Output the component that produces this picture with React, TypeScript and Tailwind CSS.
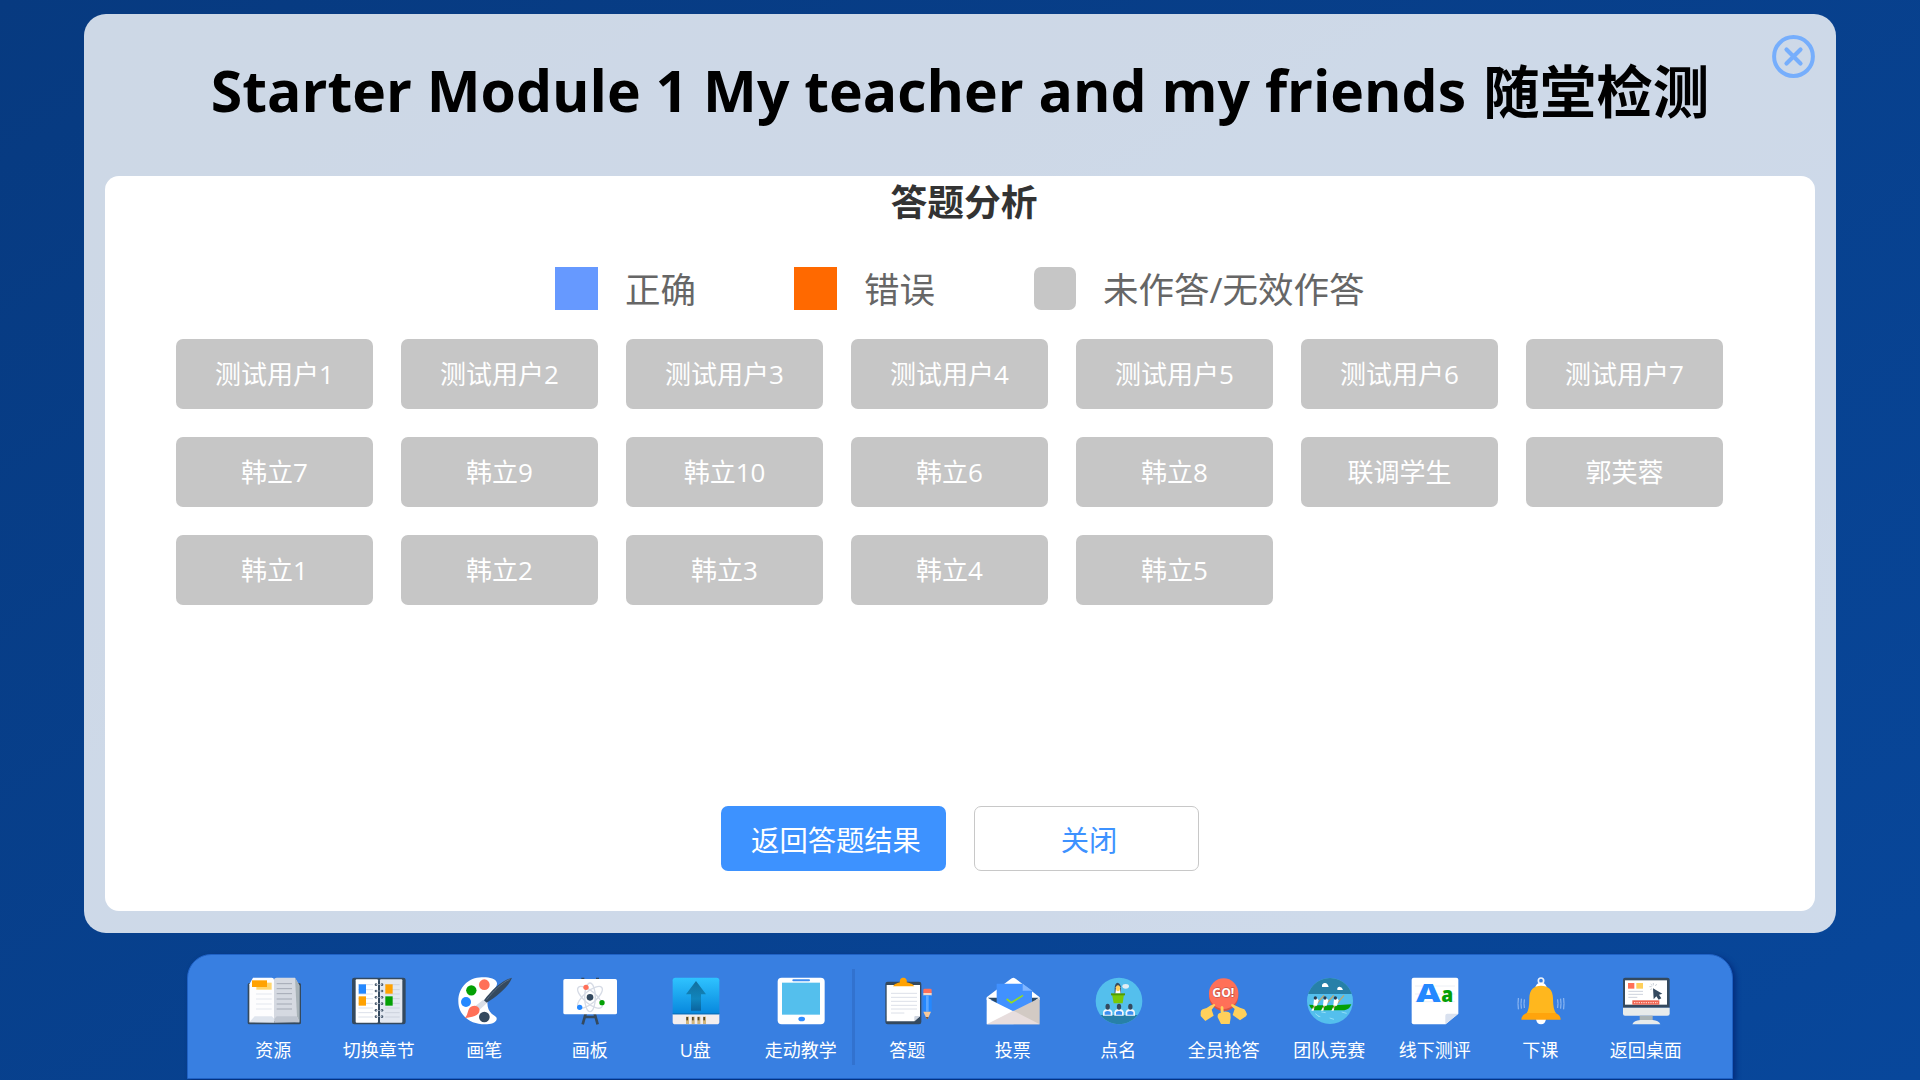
import type { ReactNode } from "react";

const students: string[] = [
  "测试用户1", "测试用户2", "测试用户3", "测试用户4", "测试用户5", "测试用户6", "测试用户7",
  "韩立7", "韩立9", "韩立10", "韩立6", "韩立8", "联调学生", "郭芙蓉",
  "韩立1", "韩立2", "韩立3", "韩立4", "韩立5",
];

type Tool = { label: string; box: string; icon: ReactNode };

const lines = (x1: number, x2: number, ys: number[], color: string, w = 2) =>
  ys.map((y) => <path key={`${x1}-${y}`} d={`M${x1} ${y}H${x2}`} stroke={color} strokeWidth={w} />);

const mainTools: Tool[] = [
  {
    label: "资源",
    box: "200 112 162 144",
    icon: (
      <>
        <rect x="202" y="130" width="160" height="124" rx="5" fill="#34495e" />
        <path d="M218 114h56q7 0 7 6v124l-74 4V134z" fill="#fdfdfe" />
        <path d="M281 120q0-6 8-6h55l12 22v112l-75-4z" fill="#d5d9e1" />
        <path d="M344 114l14 24v110l-8-18z" fill="#a9b3b8" />
        <path d="M207 248l16-18h52l7 8v11z" fill="#dfe5ee" />
        <path d="M282 249v-11l7-8h60l9 18z" fill="#bfc5cf" />
        {lines(227, 274, [163, 178, 193, 208], "#e3e7ee", 3)}
        {lines(289, 335, [132, 147, 162, 178, 193, 208], "#a3a9b4", 3)}
        <rect x="228" y="129" width="46" height="21" fill="#ffd56d" />
        <rect x="215" y="122" width="45" height="20" fill="#ffa202" />
      </>
    ),
  },
  {
    label: "切换章节",
    box: "517 112 162 144",
    icon: (
      <>
        <rect x="517" y="114" width="161" height="140" rx="7" fill="#34495e" />
        <rect x="528" y="119" width="67" height="130" rx="3" fill="#fff" />
        <rect x="601" y="119" width="67" height="130" rx="3" fill="#e3e8f0" />
        {lines(536, 580, [135, 150, 163, 177, 191, 205, 219, 232], "#dce1ea", 3)}
        {lines(616, 660, [135, 150, 163, 177, 191, 205, 219, 232], "#ccd2dd", 3)}
        <rect x="537" y="134" width="22" height="28" fill="#2488ff" />
        <rect x="537" y="170" width="22" height="28" fill="#ffa202" />
        <rect x="617" y="134" width="22" height="28" fill="#ffa202" />
        <rect x="617" y="170" width="22" height="28" fill="#04a004" />
        {[135, 154, 173, 192, 212, 231].map((y) => (
          <g key={y} fill="#4b5d70">
            <circle cx="589" cy={y} r="4" />
            <circle cx="607" cy={y} r="4" />
            <rect x="589" y={y - 1} width="18" height="2" fill="#c5ccd8" />
          </g>
        ))}
      </>
    ),
  },
  {
    label: "画笔",
    box: "833 112 162 144",
    icon: (
      <>
        <path
          d="M904 113c20-1 43 3 46 17 2 14-20 28-26 44-6 18-2 38 10 48 9 7 16 8 15 17-2 11-18 15-35 15-46 0-80-28-80-69 0-43 31-71 70-72z"
          fill="#fff"
        />
        <circle cx="912" cy="135" r="16" fill="#ff7058" />
        <circle cx="873" cy="152" r="15.500" fill="#04a004" />
        <circle cx="857" cy="187" r="15" fill="#2488ff" />
        <circle cx="912" cy="232" r="16" fill="#34495e" />
        <path d="M995 114c-30 8-62 38-84 68-5 5 2 11 8 7 32-19 66-48 76-75z" fill="#34495e" />
        <path d="M988 119c-25 11-49 36-69 61" stroke="#5b6f84" strokeWidth="3" fill="none" />
        <path d="M909 180l11 10-24 22-12-12z" fill="#d8dde6" />
        <path d="M853 235c10-8 8-22 15-31 9-9 24-8 29 3 5 21-22 26-44 28z" fill="#ff7058" />
      </>
    ),
  },
  {
    label: "画板",
    box: "129 112 162 144",
    icon: (
      <>
        <path d="M184 114h9v6h-9zM228 114h9v6h-9z" fill="#34495e" />
        <path d="M197 222l-9 32M224 222l9 32M192 232h36" stroke="#34495e" strokeWidth="8" />
        <rect x="130" y="118" width="161" height="106" rx="5" fill="#fff" />
        <g fill="none" stroke="#d6dbe5" strokeWidth="4">
          <ellipse cx="210" cy="173" rx="16" ry="43" />
          <ellipse cx="210" cy="173" rx="18" ry="46" transform="rotate(50 210 173)" />
          <ellipse cx="210" cy="173" rx="18" ry="46" transform="rotate(-50 210 173)" />
        </g>
        <circle cx="210" cy="173" r="10" fill="#34495e" />
        <circle cx="198" cy="143" r="8" fill="#ff7058" />
        <circle cx="246" cy="189" r="8" fill="#04a004" />
        <circle cx="179" cy="203" r="8" fill="#2488ff" />
      </>
    ),
  },
  {
    label: "U盘",
    box: "446 112 162 144",
    icon: (
      <>
        <defs>
          <linearGradient id="driveBody" x1="0" y1="0" x2="0" y2="1">
            <stop offset="0" stopColor="#2fc3ff" />
            <stop offset="1" stopColor="#0787dd" />
          </linearGradient>
          <linearGradient id="driveArrow" x1="0" y1="0" x2="0" y2="1">
            <stop offset="0" stopColor="#126f9d" />
            <stop offset="0.600" stopColor="#1185bd" />
            <stop offset="1" stopColor="#0a649f" />
          </linearGradient>
        </defs>
        <path d="M457 122q0-8 8-8h124q8 0 8 8v101H457z" fill="url(#driveBody)" />
        <path d="M457 224h140v22q0 8-8 8H465q-8 0-8-8z" fill="#f3eeee" />
        <rect x="457" y="221" width="140" height="3" fill="#0a6cb5" />
        <path d="M527 124l30 40h-15v49h-30v-49h-15z" fill="url(#driveArrow)" />
        {[497, 514, 531, 548].map((x) => (
          <g key={x}>
            <rect x={x} y="231" width="9" height="22" fill="#d0b57c" />
            <rect x={x + 1} y="232" width="5" height="10" fill="#55472c" />
          </g>
        ))}
      </>
    ),
  },
  {
    label: "走动教学",
    box: "762 112 162 144",
    icon: (
      <>
        <rect x="773" y="114" width="141" height="140" rx="12" fill="#fff" />
        <rect x="786" y="129" width="114" height="96" fill="#54bfed" />
        <rect x="817" y="119" width="53" height="6" rx="3" fill="#3d8cf0" />
        <ellipse cx="845" cy="238" rx="10" ry="7" fill="#2f8cff" />
      </>
    ),
  },
];

const seat = (x: number) => (
  <g key={x}>
    <path d={`M${x - 14} 228v-10q2-10 14-10t14 10v10z`} fill="#f3f6fb" />
    <path d={`M${x - 9} 225v-8q9-6 18 0v8z`} fill="#3b8ff0" />
    <ellipse cx={x} cy="201" rx="6.500" ry="9" fill="#34495e" />
  </g>
);

const rower = (x: number) => (
  <g key={x}>
    <path d={`M${x + 26} 167l-34 40`} stroke="#c3a566" strokeWidth="4" />
    <path d={`M${x - 6} 198l2-20 8-4 6 8-5 16z`} fill="#fff" />
    <circle cx={x} cy="175" r="5" fill="#2a3b4d" />
    <path d={`M${x - 8} 206l5 0-2 7h-7z`} fill="#fff" />
  </g>
);

const classTools: Tool[] = [
  {
    label: "答题",
    box: "122 112 162 144",
    icon: (
      <>
        <rect x="135" y="126" width="108" height="128" rx="7" fill="#34495e" />
        <path d="M139 136h100v94l-17 15h-83z" fill="#fff" />
        <path d="M239 229l-17 16v-13q0-3 3-3z" fill="#d0d6e0" />
        {lines(152, 230, [161, 173, 185, 197, 208], "#dce0e8", 3)}
        {lines(152, 192, [220], "#dce0e8", 3)}
        <path d="M158 140c7-10 15-9 21-12-2-8 3-14 10-14s12 6 10 14c6 3 16 2 23 12z" fill="#ffa202" />
        <path d="M249 151q0-4 4-4h17q4 0 4 4v10h-25z" fill="#ff7058" />
        <rect x="249" y="160" width="25" height="8" fill="#f4d9c8" />
        <rect x="249" y="167" width="25" height="49" fill="#2488ff" />
        <rect x="257" y="167" width="8" height="49" fill="#5da7ff" />
        <path d="M249 216h23l-10 22h-3z" fill="#f7c99b" />
        <path d="M256 232h9l-3 6h-3z" fill="#76563c" />
      </>
    ),
  },
  {
    label: "投票",
    box: "439 112 162 144",
    icon: (
      <>
        <path d="M441 173l71-54q9-9 18 0l70 54v8H441z" fill="#fff" />
        <path d="M444 174h153l-65 50z" fill="#2c4a66" />
        <path d="M471 132h78l28 22v38l-56 30-50-30z" fill="#4191ff" />
        <path d="M549 132v21h29z" fill="#81b6ff" />
        <path d="M441 175l80 40v39h-80z" fill="#fff" />
        <path d="M600 175l-80 40v39h80z" fill="#d2cac4" />
        <path d="M441 254l80-41 79 41z" fill="#e7dddd" />
        <path d="M501 178l14 11 35-22" fill="none" stroke="#94dc20" strokeWidth="5" />
      </>
    ),
  },
  {
    label: "点名",
    box: "756 112 162 144",
    icon: (
      <>
        <defs>
          <clipPath id="rollCallClip"><circle cx="837" cy="184" r="70" /></clipPath>
        </defs>
        <circle cx="837" cy="184" r="70" fill="#54bfed" />
        <rect x="766" y="226" width="142" height="30" fill="#2780a8" clipPath="url(#rollCallClip)" />
        <path d="M824 161v-15q0-15 9-17 10 4 10 17v15z" fill="#384b5c" />
        <path d="M826 162l2-19q6-9 12 0l2 19z" fill="#fff" />
        <ellipse cx="834" cy="146" rx="6" ry="9" fill="#ffd05b" />
        <path d="M816 164h36l-4 27h-27z" fill="#79c808" />
        <rect x="813" y="161" width="42" height="6" fill="#519b00" />
        <ellipse cx="857" cy="140" rx="10" ry="7" fill="#e2edf3" />
        {[803, 837, 871].map(seat)}
      </>
    ),
  },
  {
    label: "全员抢答",
    box: "112 112 162 144",
    icon: (
      <>
        <ellipse cx="192" cy="168" rx="44" ry="46" fill="#d95343" />
        <ellipse cx="192" cy="162" rx="44" ry="46" fill="#ff7058" />
        <text
          x="191" y="173" textAnchor="middle" fill="#fff" stroke="#c95848" strokeWidth="4" paintOrder="stroke"
          className="font-['Open_Sans',sans-serif] text-[38px] font-bold" textLength="66" lengthAdjust="spacingAndGlyphs"
        >
          GO!
        </text>
        <path d="M123 218q0-6 6-9l12-4q12-9 22-12 6 1 2 6l-9 11 6 18-25 16-14-15z" fill="#ffd05b" />
        <path d="M262 224q-3-10-8-15l-13-5-24-11q-5 2-1 7l9 8-6 18 22 16 18-12z" fill="#ffd05b" />
        <path d="M183 202q4-6 8 0l1 14q14-2 20 5l1 13-3 19h-26l-10-20q-1-14 9-13z" fill="#ffd05b" />
      </>
    ),
  },
  {
    label: "团队竞赛",
    box: "429 112 162 144",
    icon: (
      <>
        <defs>
          <clipPath id="raceClip"><circle cx="510" cy="184" r="69" /></clipPath>
        </defs>
        <g clipPath="url(#raceClip)">
          <rect x="440" y="112" width="142" height="144" fill="#54bfed" />
          <rect x="440" y="112" width="142" height="51" fill="#2780a8" />
          <path d="M486 142v-7q4-6 9-5 8 0 11 12zM532 151v-6q3-4 7-4 8 1 10 10z" fill="#fff" />
        </g>
        <path d="M447 195q62 4 127-1-6 16-21 18H461q-9-4-14-17z" fill="#04a004" />
        {[466, 495, 526].map(rower)}
        <path d="M466 222l10 8M484 217l13 2M509 235l13 4M545 217l15 4M474 229l7 2" stroke="#9ee4f8" strokeWidth="2.500" />
      </>
    ),
  },
  {
    label: "线下测评",
    box: "745 112 162 144",
    icon: (
      <>
        <path d="M756 120q0-6 6-6h128q6 0 6 6v102l-38 32h-96q-6 0-6-6z" fill="#fff" />
        <path d="M896 222l-39 32v-26q0-6 6-6z" fill="#d9e1ef" />
        {lines(766, 886, [139, 163, 186], "#edf0f5", 3)}
        <text x="769" y="186" fill="#2488ff" textLength="74" lengthAdjust="spacingAndGlyphs" className="font-['Open_Sans',sans-serif] text-[76px] font-extrabold">A</text>
        <text x="845" y="186" fill="#04a004" textLength="36" lengthAdjust="spacingAndGlyphs" className="font-['Open_Sans',sans-serif] text-[64px] font-extrabold">a</text>
      </>
    ),
  },
  {
    label: "下课",
    box: "221 112 162 144",
    icon: (
      <>
        <circle cx="302" cy="123" r="8" fill="none" stroke="#eef2f8" strokeWidth="5" />
        <path d="M285 142q4-13 17-13t17 13z" fill="#fff" />
        <path d="M287 238h30q-2 16-15 16t-15-16z" fill="#fff" />
        <path d="M258 222q9-10 9-46c0-26 14-38 35-38s36 12 36 38q0 36 10 46z" fill="#ffb71e" />
        <path d="M243 240q0-14 16-20h86q16 6 16 20z" fill="#ffa40c" />
        <path d="M234 175q-2 17 0 34M243 177q-2 15 0 30M252 179q-2 13 0 26M370 175q2 17 0 34M361 177q2 15 0 30M352 179q2 13 0 26" fill="none" stroke="#9cc1f5" strokeWidth="3" />
      </>
    ),
  },
  {
    label: "返回桌面",
    box: "537 112 162 144",
    icon: (
      <>
        <path d="M549 204v-84q0-6 6-6h127q7 0 7 6v84z" fill="#34495e" />
        <rect x="555" y="122" width="126" height="73" fill="#fff" />
        <path d="M549 204h140v18q0 6-7 6H555q-6 0-6-6z" fill="#e7ebeb" />
        <rect x="599" y="228" width="39" height="14" fill="#aab4b6" />
        <path d="M577 254q5-12 24-13h37q18 1 23 13z" fill="#e7ebeb" />
        <rect x="564" y="130" width="19" height="17" fill="#ff7058" />
        <rect x="589" y="130" width="20" height="17" fill="#ffd05b" />
        {lines(565, 609, [155, 164], "#cdd2dc", 3)}
        {lines(565, 592, [173], "#cdd2dc", 3)}
        <rect x="577" y="182" width="81" height="13" fill="#ef6350" />
        <path d="M582 189h72" stroke="#ffd0c8" strokeWidth="4" strokeDasharray="4 3" />
        <path d="M639 146l28 16-10 3 7 11-8 4-7-10-8 9z" fill="#34495e" />
        <path d="M628 141h7M631 150l5-3M640 130v7M632 133l5 5M650 133l-4 6" stroke="#aeb6c1" strokeWidth="2" />
      </>
    ),
  },
];

function ToolButton({ tool }: { tool: Tool }) {
  return (
    <button className="flex w-[105.5px] flex-col items-center">
      <svg viewBox={tool.box} className="h-12 w-[54px] overflow-visible">{tool.icon}</svg>
      <span className="mt-[12px] pr-px text-[18px] leading-[26px] text-white">{tool.label}</span>
    </button>
  );
}

function Legend({ swatch, label }: { swatch: string; label: string }) {
  return (
    <div className="flex items-start gap-[27px]">
      <div className={`h-[42.500px] w-[42.500px] ${swatch}`} />
      <span className="pt-px text-[35.5px] leading-[42px] text-[#666]">{label}</span>
    </div>
  );
}

export default function App() {
  return (
    <div className="flex h-[1080px] w-[1920px] flex-col items-center overflow-hidden bg-linear-to-br from-[#073a80] to-[#08479b] pt-[14px] font-['Open_Sans','Noto_Sans_CJK_SC',sans-serif]">
      <main className="relative flex h-[918.500px] w-[1751.500px] shrink-0 flex-col rounded-[22px] bg-white/80 px-[21px] pb-[21.500px]">
        <h1 className="flex h-[162px] shrink-0 items-start justify-center gap-[17px] pt-[38px] text-[56.500px] leading-[76px] font-bold whitespace-nowrap text-black">
          <span className="text-[57.100px]">Starter Module 1 My teacher and my friends</span>
          <span className="pt-[2px]">随堂检测</span>
        </h1>
        <button className="absolute top-[21px] right-[21px]">
          <svg viewBox="0 0 43 43" className="size-[43px]" fill="none" stroke="#76aefc" strokeLinecap="round">
            <circle cx="21.500" cy="21.500" r="19.400" strokeWidth="4" />
            <path d="M14.500 14.500l14 14M28.500 14.500L14.500 28.500" strokeWidth="4.200" />
          </svg>
        </button>
        <section className="flex flex-1 flex-col items-center rounded-[14px] bg-white">
          <h2 className="h-[91px] pt-[4px] pl-[8px] text-[36.8px] leading-[44px] font-bold text-[#333]">答题分析</h2>
          <div className="flex gap-[98.500px]">
            <Legend swatch="bg-[#6699ff]" label="正确" />
            <Legend swatch="bg-[#ff6900]" label="错误" />
            <Legend swatch="rounded-[7px] bg-[#c6c6c6]" label="未作答/无效作答" />
          </div>
          <div className="mt-[28.500px] ml-[-21px] grid grid-cols-7 gap-[28px]">
            {students.map((name) => (
              <div key={name} className="flex h-[70px] w-[197px] items-center justify-center rounded-[7px] bg-[#c6c6c6] pt-[2px] text-[26px] text-white">
                {name}
              </div>
            ))}
          </div>
          <div className="mt-auto mb-[40.500px] flex gap-[28px] text-[28.3px]">
            <button className="h-[65px] w-[225px] rounded-[7px] bg-[#3d92ff] pt-[4px] pl-[5px] whitespace-nowrap text-white">返回答题结果</button>
            <button className="h-[65px] w-[225px] rounded-[7px] border border-[#c8c8c8] bg-white pt-[4px] pl-[5px] text-[#3d92ff]">关闭</button>
          </div>
        </section>
      </main>
      <nav className="mt-[21.500px] flex h-[125px] w-[1546px] shrink-0 rounded-t-[24px] border border-[#1f62c6] bg-[#387fe1] pt-[22px] pl-[33px] shadow-[3px_2px_5px_rgba(0,30,110,0.6)]">
        {mainTools.map((t) => <ToolButton key={t.label} tool={t} />)}
        <div className="-mt-[8px] -ml-[2px] h-[96px] w-[3px] bg-[#3272cf]" />
        {classTools.map((t) => <ToolButton key={t.label} tool={t} />)}
      </nav>
    </div>
  );
}
